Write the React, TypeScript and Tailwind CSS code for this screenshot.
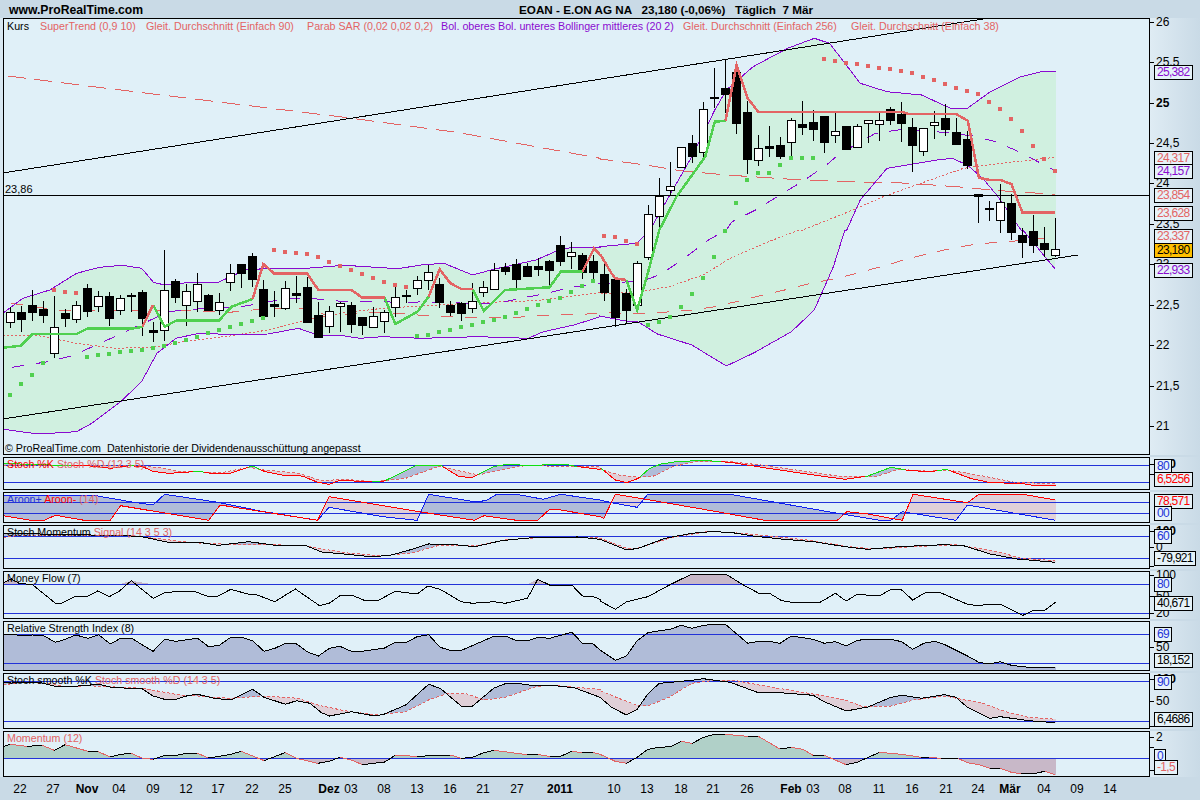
type Pt = number[];

const SALMON = '#e36464';
const PURPLE = '#8a0ad0';
const GREEN = '#50d050';
const BLUE = '#2232d8';

// traced points are in crop units, these bring them back to page pixels
const L = (p: Pt[], top: number) => p.map(([x, y]) => [x / 2.613, top + y / 3]);
const R = (p: Pt[], top: number) => p.map(([x, y]) => [600 + x / 2.613, top + y / 3]);

const pts = (p: Pt[]) => p.map(([x, y]) => `${x.toFixed(1)},${y.toFixed(1)}`).join(' ');

function at(p: Pt[], x: number) {
  if (x <= p[0][0]) return p[0][1];
  for (let i = 1; i < p.length; i++) {
    if (x <= p[i][0]) {
      const t = (x - p[i - 1][0]) / (p[i][0] - p[i - 1][0] || 1);
      return p[i - 1][1] + t * (p[i][1] - p[i - 1][1]);
    }
  }
  return p[p.length - 1][1];
}

// quads between two lines, split on which one is above
function between(a: Pt[], b: Pt[], from = 4, to = 1056) {
  let up = '';
  let down = '';
  for (let x = from; x < to; x++) {
    const a0 = at(a, x), a1 = at(a, x + 1), b0 = at(b, x), b1 = at(b, x + 1);
    const d = `M${x} ${a0.toFixed(1)}L${x + 1} ${a1.toFixed(1)}L${x + 1} ${b1.toFixed(1)}L${x} ${b0.toFixed(1)}Z`;
    if (a0 + a1 < b0 + b1) up += d;
    else down += d;
  }
  return { up, down };
}

function splitLine(a: Pt[], b: Pt[], from = 4, to = 1056) {
  let up = '';
  let down = '';
  for (let x = from; x < to; x++) {
    const d = `M${x} ${at(a, x).toFixed(1)}L${x + 1} ${at(a, x + 1).toFixed(1)}`;
    if (at(a, x) < at(b, x)) up += d;
    else down += d;
  }
  return { up, down };
}

// [wick top, body top, body bottom, wick bottom, filled]
const candlesA: Pt[] = [
  [232, 247, 278, 295, 0], [228, 246, 267, 305, 1], [180, 225, 246, 272, 1], [213, 236, 255, 280, 1], [198, 292, 370, 385, 0],
  [238, 249, 264, 292, 1], [213, 226, 269, 280, 0], [162, 175, 243, 260, 1], [183, 199, 230, 245, 0], [185, 198, 264, 288, 1],
  [195, 205, 240, 255, 0], [188, 196, 200, 245, 1], [180, 186, 264, 318, 1], [276, 300, 305, 336, 1], [60, 181, 301, 333, 0],
  [148, 153, 200, 220, 1], [162, 184, 227, 288, 0], [128, 162, 212, 245, 0], [192, 195, 240, 240, 1], [190, 217, 240, 255, 0],
  [102, 130, 158, 183, 0], [102, 102, 129, 175, 1], [70, 78, 146, 172, 1], [150, 177, 258, 270, 1], [182, 222, 228, 262, 1],
  [153, 175, 236, 240, 0], [138, 189, 194, 220, 1], [140, 171, 275, 275, 1], [215, 255, 320, 322, 1], [228, 243, 287, 310, 0],
  [215, 220, 230, 305, 0], [215, 225, 282, 310, 1], [260, 261, 285, 315, 1], [232, 259, 293, 293, 0], [240, 247, 275, 308, 0],
  [170, 202, 233, 260, 0], [180, 195, 199, 218, 1], [138, 151, 176, 195, 0], [105, 127, 152, 180, 0], [145, 162, 215, 234, 1],
  [213, 225, 246, 258, 1], [215, 220, 251, 272, 1], [160, 214, 236, 250, 0], [153, 172, 187, 200, 0], [100, 120, 176, 178, 0],
  [100, 110, 122, 135, 1], [88, 102, 147, 178, 1], [98, 108, 137, 138, 1], [85, 108, 116, 138, 1], [90, 93, 120, 168, 1],
  [18, 45, 92, 108, 1], [35, 67, 80, 118, 0], [70, 76, 126, 148, 1], [75, 94, 128, 160, 1], [100, 132, 187, 212, 1],
  [148, 148, 263, 290, 1], [178, 190, 240, 278, 1], [93, 100, 225, 225, 0],
];
const candlesB: Pt[] = [
  [615, 642, 771, 780, 0], [535, 588, 647, 690, 0], [487, 559, 572, 588, 0], [442, 442, 503, 505, 0], [405, 430, 470, 490, 1],
  [305, 328, 458, 475, 0], [205, 291, 295, 325, 1], [178, 265, 282, 340, 1], [195, 215, 368, 402, 1], [303, 337, 478, 522, 1],
  [405, 445, 481, 497, 0], [378, 438, 443, 470, 1], [412, 435, 467, 478, 1], [355, 361, 427, 468, 0], [303, 372, 380, 405, 1],
  [330, 366, 386, 422, 1], [348, 348, 425, 458, 1], [340, 394, 406, 428, 0], [378, 378, 446, 448, 1], [372, 379, 442, 445, 0],
  [362, 361, 370, 428, 0], [340, 361, 373, 422, 0], [320, 328, 362, 375, 1], [305, 343, 371, 425, 1], [355, 381, 434, 515, 1],
  [385, 385, 454, 467, 0], [332, 367, 376, 416, 0], [313, 355, 389, 407, 1], [355, 396, 431, 431, 1], [393, 418, 497, 508, 1],
  [583, 583, 589, 668, 1], [603, 625, 629, 662, 1], [553, 605, 660, 700, 0], [583, 610, 698, 720, 1], [685, 705, 725, 773, 1],
  [645, 692, 735, 760, 1], [680, 730, 748, 770, 1], [655, 748, 766, 770, 0],
];
const candles = [
  ...candlesA.map(([a, b, c, d, f]) => [230 + a / 3, 230 + b / 3, 230 + c / 3, 230 + d / 3, f]),
  ...candlesB.map(([a, b, c, d, f]) => [a / 3, b / 3, c / 3, d / 3, f]),
];

const bbUpper = [
  ...L([[9, 248], [60, 205], [130, 180], [200, 130], [260, 112], [320, 106], [370, 115], [401, 157], [430, 165], [490, 158], [570, 157], [603, 140], [640, 120], [690, 116], [800, 115], [900, 106], [1040, 116], [1100, 105], [1160, 100], [1235, 135], [1290, 118], [1400, 90], [1465, 58], [1500, 52], [1568, 52]], 230),
  ...R([[0, 50], [96, 40]], 230),
  ...R([[130, 690], [170, 610], [240, 470], [300, 330], [330, 270], [400, 200], [490, 145], [560, 115], [600, 130], [640, 190], [680, 250], [750, 275], [840, 285], [920, 327], [960, 325], [1020, 275], [1100, 230], [1160, 213], [1192, 214]], 0),
];
const bbLower = [
  ...L([[9, 598], [100, 612], [200, 605], [240, 580], [315, 515], [370, 455], [410, 370], [460, 325], [520, 310], [620, 314], [700, 312], [780, 295], [835, 317], [890, 316], [940, 325], [1000, 320], [1100, 325], [1250, 320], [1380, 325], [1420, 305], [1500, 285], [1568, 260]], 230),
  ...R([[0, 258], [60, 272], [100, 276], [150, 312], [240, 345], [330, 408], [400, 370], [500, 305], [560, 240], [610, 110], [640, 0]], 230),
  ...R([[645, 690], [680, 600], [750, 505], [880, 480], [920, 475], [960, 495], [1000, 535], [1040, 590], [1100, 690]], 0),
  ...R([[1105, 0], [1190, 118]], 230),
];
const bbMid = [
  ...L([[32, 412], [125, 395], [188, 377], [250, 346], [313, 313], [375, 280], [440, 245], [500, 238], [560, 235], [620, 232], [690, 218], [750, 205], [810, 205], [870, 212], [930, 216], [990, 214], [1050, 218], [1110, 215], [1170, 218], [1230, 220], [1300, 220], [1360, 205], [1430, 190], [1490, 172], [1568, 160]], 230),
  ...R([[30, 160], [120, 150], [160, 132], [220, 85], [280, 32], [330, 0]], 230),
  ...R([[345, 665], [410, 628], [470, 585], [535, 540], [595, 492], [625, 462], [720, 400], [790, 388], [850, 392], [920, 400], [975, 408], [1035, 425], [1100, 458], [1190, 513]], 0),
];
const ma90 = [
  ...L([[20, 228], [300, 268], [600, 310], [900, 352], [1200, 398], [1568, 475]], 0),
  ...R([[0, 477], [120, 495], [210, 512], [330, 525], [500, 538], [700, 547], [775, 548], [870, 555], [950, 562], [1040, 572], [1100, 575], [1190, 585]], 0),
];
const ma256 = [
  ...L([[9, 315], [100, 317], [200, 340], [300, 355], [400, 352], [480, 335], [600, 318], [700, 300], [800, 270], [900, 248], [1000, 235], [1100, 228], [1250, 218], [1400, 212], [1568, 188]], 230),
  ...R([[0, 190], [90, 188], [180, 170], [270, 135], [340, 85], [440, 35], [520, 0]], 230),
  ...R([[530, 690], [650, 635], [740, 590], [850, 545], [950, 505], [1050, 490], [1190, 472]], 0),
];
const ma38 = [
  ...L([[30, 220], [60, 225], [160, 242], [190, 240], [220, 243], [285, 240], [470, 240], [500, 240], [570, 247], [600, 247], [660, 240], [730, 235], [815, 235], [850, 255], [980, 248], [1040, 250], [1100, 256], [1160, 260], [1220, 262], [1350, 262], [1420, 256], [1500, 254], [1568, 250]], 230),
  ...R([[30, 248], [95, 252], [165, 247], [240, 240], [300, 230], [355, 215], [420, 197], [490, 178], [550, 160], [620, 145], [680, 127], [750, 105], [800, 88], [860, 70], [920, 55], [985, 42], [1060, 35], [1120, 30], [1190, 22]], 230),
];

const superGreen: Pt[][] = [
  L([[9, 353], [55, 347], [85, 312], [200, 312], [228, 296], [345, 296], [372, 290]], 230),
  L([[400, 225], [430, 290], [460, 272], [572, 272], [605, 230], [660, 207]], 230),
  L([[1005, 203], [1033, 282], [1091, 245], [1120, 200]], 230),
  L([[1235, 177], [1264, 243], [1320, 180], [1436, 172], [1465, 125], [1522, 125]], 230),
  [...R([[69, 150], [97, 240], [125, 130], [155, 0]], 230), ...R([[200, 590], [250, 510], [275, 470], [300, 365], [328, 362]], 0)],
];
const superRed: Pt[][] = [
  L([[372, 290], [400, 225]], 230),
  L([[660, 207], [688, 102], [717, 131], [803, 131], [832, 180], [918, 180], [947, 203], [1005, 203]], 230),
  L([[1120, 200], [1149, 118], [1177, 160], [1206, 177], [1235, 177]], 230),
  [...L([[1522, 125], [1552, 55], [1568, 75]], 230), ...R([[0, 72], [30, 130], [40, 145], [69, 150]], 230)],
  R([[328, 362], [357, 195], [386, 295], [414, 336], [790, 336], [806, 342], [930, 342], [961, 362], [990, 533], [1018, 540], [1046, 540], [1075, 552], [1104, 638], [1190, 638]], 0),
];

const sarGreen = [
  ...L([[26, 495], [55, 462], [84, 434], [113, 400], [227, 380], [256, 375], [285, 371], [313, 366], [342, 363], [371, 360], [400, 353], [429, 349], [458, 339], [487, 330], [515, 322], [544, 308], [573, 300], [601, 291], [630, 281], [659, 273], [688, 264], [1090, 318], [1119, 314], [1148, 306], [1177, 299], [1205, 291], [1234, 285], [1262, 276], [1291, 269], [1320, 261], [1349, 249], [1377, 237], [1406, 225], [1435, 213], [1464, 204], [1492, 185], [1521, 168], [1550, 153]], 230),
  ...R([[125, 285], [154, 275], [183, 260], [212, 231], [240, 192], [269, 144], [298, 81], [326, 3]], 230),
  ...R([[355, 608], [384, 540], [413, 519], [442, 519], [471, 495], [499, 474], [528, 474], [557, 474]], 0),
];
const sarRed = [
  ...L([[141, 180], [170, 185], [198, 189], [716, 60], [745, 66], [773, 69], [802, 72], [831, 81], [860, 96], [888, 108], [917, 120], [946, 132], [975, 144], [1003, 156], [1032, 165], [1061, 171]], 230),
  ...R([[11, 18], [40, 21], [68, 33], [97, 42]], 230),
  ...R([[586, 177], [615, 183], [643, 189], [672, 192], [701, 198], [730, 204], [758, 207], [787, 213], [816, 219], [844, 231], [873, 240], [902, 252], [931, 264], [959, 273], [988, 282], [1017, 306], [1046, 327], [1074, 357], [1103, 393], [1132, 438], [1161, 477], [1190, 513]], 0),
];

const stochK = [
  ...L([[9, 40], [100, 44], [240, 48], [290, 55], [340, 47], [372, 50], [400, 64], [440, 70], [520, 64], [550, 70], [600, 70], [660, 48], [690, 64], [740, 76], [790, 78], [830, 97], [860, 103], [890, 90], [950, 95], [1005, 93], [1060, 62], [1090, 45], [1150, 45], [1200, 80], [1235, 82], [1290, 50], [1320, 44], [1410, 46], [1430, 43], [1480, 44], [1510, 50], [1568, 58]], 450),
  ...R([[0, 52], [40, 90], [70, 98], [100, 85], [130, 55], [160, 42], [200, 35], [250, 32], [280, 32], [340, 37], [440, 55], [540, 72], [640, 88], [700, 78], [760, 52], [800, 60], [860, 66], [905, 58], [970, 86], [1020, 98], [1100, 100], [1130, 106], [1190, 106]], 450),
];
const stochD = [
  ...L([[9, 45], [140, 46], [370, 48], [410, 52], [470, 64], [580, 68], [650, 52], [690, 60], [780, 70], [840, 92], [900, 88], [980, 95], [1060, 85], [1120, 60], [1150, 48], [1190, 60], [1250, 75], [1300, 62], [1370, 47], [1568, 50]], 450),
  ...R([[0, 58], [50, 75], [100, 82], [140, 78], [190, 50], [250, 35], [340, 35], [420, 45], [500, 58], [620, 78], [720, 80], [780, 58], [860, 64], [910, 60], [1000, 78], [1080, 96], [1150, 100], [1190, 102]], 450),
];
const aroonUp = [
  ...L([[9, 135], [240, 135], [350, 157], [400, 165], [430, 133], [570, 157], [680, 183], [830, 211], [860, 172], [1000, 200], [1090, 211], [1120, 133], [1240, 155], [1270, 152], [1295, 135], [1350, 133], [1420, 148], [1465, 133], [1568, 150]], 450),
  ...R([[30, 158], [97, 172], [125, 133], [340, 133], [620, 190], [730, 211], [760, 211], [790, 185], [930, 211], [960, 165], [1190, 211]], 450),
];
const aroonDown = [
  ...L([[9, 197], [80, 211], [115, 211], [145, 196], [220, 211], [288, 211], [315, 167], [545, 211], [575, 165], [830, 211], [860, 140], [1100, 186], [1240, 211], [1265, 197], [1350, 211], [1405, 211], [1436, 178], [1465, 180], [1568, 200]], 450),
  ...R([[10, 205], [40, 133], [120, 148], [300, 184], [430, 211], [620, 211], [645, 185], [700, 192], [760, 205], [790, 211], [818, 133], [960, 158], [990, 133], [1105, 133], [1190, 150]], 450),
];
const momK = [
  ...L([[9, 250], [330, 257], [370, 260], [440, 277], [520, 277], [570, 286], [650, 275], [720, 286], [800, 287], [840, 306], [900, 312], [970, 320], [1020, 316], [1070, 300], [1120, 282], [1180, 283], [1240, 290], [1310, 272], [1400, 262], [1510, 261], [1568, 268]], 450),
  ...R([[0, 268], [70, 300], [100, 295], [170, 265], [240, 250], [290, 245], [340, 247], [400, 258], [480, 268], [560, 275], [640, 290], [700, 298], [780, 290], [900, 284], [950, 287], [1020, 312], [1090, 327], [1190, 337]], 450),
];
const momD = [
  ...L([[9, 262], [60, 255], [330, 257], [410, 265], [500, 278], [620, 284], [740, 285], [800, 288], [900, 308], [1000, 318], [1080, 308], [1150, 285], [1240, 288], [1320, 270], [1420, 262], [1568, 263]], 450),
  ...R([[0, 265], [70, 295], [100, 294], [190, 262], [280, 245], [340, 247], [440, 258], [540, 270], [650, 290], [720, 297], [820, 290], [930, 284], [1040, 305], [1100, 325], [1190, 332]], 450),
];
const moneyFlow = [
  ...L([[9, 398], [30, 387], [50, 400], [85, 404], [145, 460], [160, 460], [200, 438], [230, 438], [255, 423], [285, 440], [310, 425], [343, 392], [400, 445], [430, 428], [470, 424], [510, 425], [545, 440], [570, 438], [603, 418], [650, 433], [670, 434], [718, 455], [772, 417], [835, 467], [860, 460], [890, 436], [920, 436], [950, 450], [990, 450], [1033, 424], [1090, 432], [1118, 408], [1150, 418], [1205, 455], [1235, 460], [1290, 455], [1320, 460], [1378, 445], [1405, 388], [1436, 405], [1494, 405], [1522, 438], [1550, 440], [1568, 448]], 450),
  ...R([[0, 453], [40, 478], [70, 455], [125, 440], [185, 403], [240, 372], [328, 372], [375, 405], [415, 430], [443, 430], [475, 452], [500, 457], [575, 457], [615, 430], [643, 453], [672, 433], [730, 438], [760, 418], [788, 420], [817, 450], [850, 428], [890, 428], [960, 463], [990, 467], [1010, 463], [1046, 463], [1105, 496], [1133, 481], [1162, 481], [1190, 457]], 450),
];
const rsi = [
  ...L([[9, 42], [30, 42], [55, 47], [85, 45], [115, 48], [145, 67], [170, 58], [198, 45], [230, 55], [258, 44], [288, 72], [315, 55], [345, 55], [372, 75], [400, 94], [430, 58], [460, 64], [516, 55], [546, 81], [574, 75], [603, 52], [632, 52], [660, 62], [690, 94], [718, 85], [746, 70], [775, 72], [805, 97], [832, 108], [861, 85], [888, 79], [918, 94], [947, 94], [1005, 84], [1033, 67], [1062, 67], [1090, 50], [1120, 44], [1150, 82], [1177, 91], [1206, 91], [1264, 62], [1292, 48], [1320, 48], [1350, 62], [1378, 62], [1407, 52], [1436, 55], [1494, 37], [1522, 70], [1550, 72], [1568, 90]], 620),
  ...R([[40, 121], [69, 108], [97, 62], [125, 38], [155, 32], [184, 28], [212, 16], [241, 25], [270, 16], [300, 13], [328, 13], [386, 70], [414, 64], [443, 64], [470, 70], [500, 48], [557, 58], [586, 70], [615, 65], [643, 78], [672, 61], [702, 58], [760, 58], [788, 65], [817, 88], [846, 70], [875, 64], [903, 75], [960, 108], [990, 127], [1018, 132], [1046, 125], [1075, 136], [1120, 142], [1190, 142]], 620),
];
const smoothK = [
  ...L([[9, 188], [30, 186], [100, 186], [140, 198], [170, 201], [260, 193], [290, 202], [372, 207], [400, 228], [430, 238], [460, 238], [490, 227], [516, 223], [560, 235], [603, 240], [660, 208], [690, 232], [746, 253], [775, 242], [810, 250], [840, 278], [861, 288], [918, 275], [980, 288], [1005, 282], [1060, 255], [1120, 193], [1150, 205], [1205, 258], [1235, 258], [1290, 205], [1320, 191], [1350, 190], [1400, 198], [1440, 196], [1500, 203], [1568, 232]], 620),
  ...R([[30, 262], [69, 285], [97, 268], [125, 222], [155, 190], [185, 187], [240, 181], [270, 176], [300, 181], [340, 187], [414, 218], [470, 218], [557, 226], [586, 245], [643, 273], [700, 261], [760, 232], [790, 226], [840, 235], [900, 224], [930, 232], [960, 262], [1018, 295], [1046, 290], [1120, 302], [1190, 308]], 620),
];
const smoothD = [
  ...L([[9, 195], [60, 186], [140, 192], [170, 201], [230, 197], [372, 205], [470, 225], [516, 228], [600, 235], [690, 228], [780, 235], [830, 255], [900, 272], [980, 285], [1060, 275], [1120, 240], [1170, 220], [1220, 222], [1265, 240], [1320, 232], [1400, 200], [1440, 196], [1568, 208]], 620),
  ...R([[0, 212], [60, 240], [97, 256], [125, 258], [180, 232], [240, 190], [300, 181], [350, 181], [440, 200], [557, 222], [640, 240], [690, 261], [760, 258], [820, 240], [900, 228], [1000, 250], [1060, 275], [1120, 292], [1190, 298]], 620),
];
const momentum = [
  ...L([[9, 380], [27, 373], [70, 379], [110, 376], [142, 391], [170, 374], [230, 394], [255, 394], [288, 411], [315, 403], [343, 400], [372, 415], [400, 418], [430, 406], [460, 406], [488, 400], [516, 400], [545, 414], [603, 403], [630, 394], [690, 422], [745, 398], [775, 415], [830, 430], [860, 424], [888, 412], [918, 420], [947, 434], [1005, 426], [1033, 406], [1090, 409], [1177, 405], [1205, 415], [1235, 412], [1264, 398], [1292, 391], [1350, 400], [1378, 404], [1407, 404], [1436, 409], [1465, 409], [1494, 394], [1522, 398], [1550, 398], [1568, 403]], 620),
  ...R([[40, 424], [69, 430], [97, 412], [125, 388], [155, 382], [185, 380], [212, 364], [241, 370], [270, 352], [300, 343], [328, 343], [386, 349], [414, 349], [470, 387], [500, 382], [530, 388], [557, 406], [586, 406], [643, 434], [672, 427], [730, 397], [788, 403], [840, 412], [860, 412], [890, 415], [935, 415], [960, 428], [990, 434], [1018, 445], [1046, 445], [1075, 457], [1100, 461], [1133, 461], [1162, 454], [1190, 464]], 620),
];

function Svg({ top, height, children }: { top: number; height: number; children: React.ReactNode }) {
  // page coordinates go straight into the chart, so only the box has to be offset
  return (
    <svg width={1145} height={height - 2} viewBox={`4 ${top + 1} 1145 ${height - 2}`} shapeRendering="crispEdges" className="block">
      {children}
    </svg>
  );
}

const Level = ({ y }: { y: number }) => <line x1={4} x2={1149} y1={y} y2={y} stroke={BLUE} strokeWidth={1} />;

function Panel({ top, height, children, label, tags }: { top: number; height: number; children: React.ReactNode; label?: React.ReactNode; tags?: React.ReactNode }) {
  return (
    <div className="flex" style={{ height }}>
      <div className="w-[3px] bg-[#d8e7f0]" />
      <div className="relative box-border w-[1147px] border border-black bg-[#e0f0f8]">
        <Svg top={top} height={height}>{children}</Svg>
        {label && <div className="absolute left-[3px] top-0 whitespace-pre text-[10.7px] leading-[13px]">{label}</div>}
      </div>
      <div className="relative w-[50px] bg-gradient-to-r from-[#dfecf4] to-[#c9dae6] text-[12px]">
        {tags}
      </div>
    </div>
  );
}

const Gap = () => <div className="h-[2px] w-[1150px] bg-[#dcebf4]" />;

function Tick({ y, top, text, bold }: { y: number; top: number; text?: string; bold?: boolean }) {
  return (
    <div className="absolute left-0 flex items-center" style={{ top: y - top - 7, height: 14 }}>
      <span className="h-px w-[4px] bg-black" />
      {text && <span className={`ml-[2px] text-black ${bold ? 'font-bold' : ''}`}>{text}</span>}
    </div>
  );
}

function Tag({ y, top, text, color, bg }: { y: number; top: number; text: string; color: string; bg?: string }) {
  return (
    <div
      className="absolute left-[4px] box-border flex h-[15px] items-center border border-black px-[2px] text-[12px] leading-none tracking-[-0.7px]"
      style={{ top: y - top - 7.5, color, background: bg ?? '#e6f2f8' }}
    >
      {text}
    </div>
  );
}

function StochLines({ k, d, upColor, downColor }: { k: Pt[]; d: Pt[]; upColor: string; downColor: string }) {
  const s = splitLine(k, d);
  return (
    <>
      <path d={s.up} fill="none" stroke={upColor} strokeWidth={1} />
      <path d={s.down} fill="none" stroke={downColor} strokeWidth={1} />
    </>
  );
}

function Fill({ a, b, up, down }: { a: Pt[]; b: Pt[]; up: string; down: string }) {
  const f = between(a, b);
  return (
    <>
      <path d={f.up} fill={up} />
      <path d={f.down} fill={down} />
    </>
  );
}

const dates: [number, string, boolean?][] = [
  [20, '22'], [53, '27'], [87, 'Nov', true], [119, '04'], [153, '09'], [186, '12'], [218, '17'], [252, '22'], [285, '25'], [329, 'Dez', true], [351, '03'], [384, '08'], [417, '13'], [450, '16'], [483, '21'], [517, '27'], [560, '2011', true],
  [614, '10'], [647, '13'], [681, '18'], [713, '21'], [747, '26'], [791, 'Feb', true], [813, '03'], [845, '08'], [879, '11'], [912, '16'], [946, '21'], [978, '24'], [1010, 'Mär', true], [1044, '04'], [1077, '09'], [1110, '14'],
];

export default function App() {
  const green = `${pts(bbUpper)} ${pts([...bbLower].reverse())}`;

  return (
    <div className="flex h-[800px] w-[1200px] flex-col overflow-hidden bg-[#c9dae6] font-['Liberation_Sans',sans-serif] text-black">
      <div className="relative h-[18px] shrink-0 font-bold leading-[20px]">
        <span className="absolute left-[9px] text-[12.2px]">www.ProRealTime.com</span>
        <span className="absolute left-[519px] whitespace-pre text-[11.7px]">EOAN - E.ON AG NA   23,180 (-0,06%)   Täglich  7 Mär</span>
      </div>

      <Panel
        top={18}
        height={437}
        label={
          <div className="relative h-[14px] w-[1100px]">
            <span className="absolute left-0 top-[1px]">Kurs</span>
            <span className="absolute left-[33px] top-[1px] text-[#e36464]">SuperTrend (0,9 10)</span>
            <span className="absolute left-[139px] top-[1px] text-[#e36464]">Gleit. Durchschnitt (Einfach 90)</span>
            <span className="absolute left-[300px] top-[1px] text-[#e36464]">Parab SAR (0,02 0,02 0,2)</span>
            <span className="absolute left-[434px] top-[1px] text-[#8a0ad0]">Bol. oberes Bol. unteres Bollinger mittleres (20 2)</span>
            <span className="absolute left-[676px] top-[1px] text-[#e36464]">Gleit. Durchschnitt (Einfach 256)</span>
            <span className="absolute left-[844px] top-[1px] text-[#e36464]">Gleit. Durchschnitt (Einfach 38)</span>
          </div>
        }
        tags={
          <>
            <Tick y={22} top={18} text="26" />
            <Tick y={62} top={18} text="25,5" />
            <Tick y={103} top={18} text="25" bold />
            <Tick y={143} top={18} text="24,5" />
            <Tick y={183} top={18} text="24" />
            <Tick y={224} top={18} text="23,5" />
            <Tick y={264} top={18} text="23" />
            <Tick y={305} top={18} text="22,5" />
            <Tick y={345} top={18} text="22" />
            <Tick y={386} top={18} text="21,5" />
            <Tick y={426} top={18} text="21" />
            <Tag y={72} top={18} text="25,382" color={PURPLE} />
            <Tag y={158} top={18} text="24,317" color={SALMON} />
            <Tag y={171} top={18} text="24,157" color={PURPLE} />
            <Tag y={195} top={18} text="23,854" color={SALMON} />
            <Tag y={213} top={18} text="23,628" color={SALMON} />
            <Tag y={236} top={18} text="23,337" color={SALMON} />
            <Tag y={250} top={18} text="23,180" color="#000" bg="#ffc000" />
            <Tag y={270} top={18} text="22,933" color={PURPLE} />
          </>
        }
      >
        <polygon points={green} fill="#d0f0e0" />
        <polyline points={pts(ma90)} fill="none" stroke={SALMON} strokeDasharray="18 9" />
        <polyline points={pts(ma38)} fill="none" stroke={SALMON} strokeDasharray="12 12" />
        <polyline points={pts(ma256)} fill="none" stroke={SALMON} strokeDasharray="2 2" />
        <polyline points={pts(bbUpper)} fill="none" stroke={PURPLE} />
        <polyline points={pts(bbLower)} fill="none" stroke={PURPLE} />
        <polyline points={pts(bbMid)} fill="none" stroke={PURPLE} strokeDasharray="12 12" />
        <line x1={4} x2={1149} y1={195} y2={195} stroke="#000" />
        <line x1={4} y1={172.8} x2={983} y2={19} stroke="#000" />
        <line x1={4} y1={418.8} x2={1078} y2={255} stroke="#000" />
        {candles.map(([a, b, c, d, f], i) => {
          const x = Math.round(10.3 + 11 * i);
          return (
            <g key={i}>
              <line x1={x + 0.5} x2={x + 0.5} y1={a} y2={d} stroke="#000" />
              <rect x={x - 3.5} y={Math.round(b)} width={8} height={Math.max(Math.round(c - b), 1)} fill={f ? '#000' : '#fff'} stroke="#000" />
            </g>
          );
        })}
        {superGreen.map((p, i) => <polyline key={i} points={pts(p)} fill="none" stroke={GREEN} strokeWidth={2.5} />)}
        {superRed.map((p, i) => <polyline key={i} points={pts(p)} fill="none" stroke={SALMON} strokeWidth={2.5} />)}
        {sarGreen.map(([x, y], i) => <rect key={i} x={Math.round(x) - 2} y={Math.round(y) - 2} width={4} height={4} fill={GREEN} />)}
        {sarRed.map(([x, y], i) => <rect key={i} x={Math.round(x) - 2} y={Math.round(y) - 2} width={4} height={4} fill={SALMON} />)}
        <text x={5} y={193} fontSize={11} fill="#000" fontFamily="'Liberation Sans', sans-serif">23,86</text>
        <text x={5} y={452} fontSize={10.7} fill="#000" xmlSpace="preserve" fontFamily="'Liberation Sans', sans-serif">© ProRealTime.com  Datenhistorie der Dividendenausschüttung angepasst</text>
      </Panel>
      <Gap />

      <Panel
        top={457}
        height={33}
        label={<span><span className="text-[#ff0000]">Stoch %K </span><span className="text-[#e36464]">Stoch %D (12 3 5)</span></span>}
        tags={
          <>
            <Tick y={464} top={457} text="100" bold />
            <Tick y={474} top={457} />
            <Tag y={466} top={457} text="80" color={BLUE} />
            <Tag y={479} top={457} text="6,5256" color="#ff0000" />
          </>
        }
      >
        <Fill a={stochK} b={stochD} up="#b0bcd8" down="#e0d0d8" />
        <Level y={465.5} />
        <Level y={482.5} />
        <polyline points={pts(stochD)} fill="none" stroke={SALMON} strokeDasharray="3 2" />
        <StochLines k={stochK} d={stochD} upColor="#10e010" downColor="#ff0000" />
      </Panel>
      <Gap />

      <Panel
        top={492}
        height={31}
        label={<span><span className="text-[#2232d8]">Aroon+ </span><span className="text-[#ff0000]">Aroon- </span><span className="text-[#e36464]">(14)</span></span>}
        tags={
          <>
            <Tag y={501} top={492} text="78,571" color="#ff0000" />
            <Tag y={513} top={492} text="00" color={BLUE} />
          </>
        }
      >
        <Fill a={aroonUp} b={aroonDown} up="#b0bcd8" down="#e0d0d8" />
        <Level y={502} />
        <Level y={513} />
        <polyline points={pts(aroonUp)} fill="none" stroke="#1020f0" />
        <polyline points={pts(aroonDown)} fill="none" stroke="#ff0000" />
      </Panel>
      <Gap />

      <Panel
        top={525}
        height={44}
        label={<span><span>Stoch Momentum </span><span className="text-[#e36464]">Signal (14 3 5 3)</span></span>}
        tags={
          <>
            <Tick y={531} top={525} text="100" bold />
            <Tick y={547} top={525} text="0" />
            <Tick y={566} top={525} />
            <Tag y={536} top={525} text="60" color={BLUE} />
            <Tag y={558} top={525} text="-79,921" color="#000" />
          </>
        }
      >
        <Fill a={momK} b={momD} up="#b0bcd8" down="#e0d0d8" />
        <Level y={536.5} />
        <Level y={558.5} />
        <polyline points={pts(momD)} fill="none" stroke={SALMON} strokeDasharray="3 2" />
        <polyline points={pts(momK)} fill="none" stroke="#000" />
      </Panel>
      <Gap />

      <Panel
        top={571}
        height={48}
        label={<span>Money Flow (7)</span>}
        tags={
          <>
            <Tick y={575} top={571} text="100" />
            <Tick y={596} top={571} text="50" />
            <Tick y={613} top={571} text="20" />
            <Tag y={584} top={571} text="80" color={BLUE} />
            <Tag y={603} top={571} text="40,671" color="#000" />
          </>
        }
      >
        <path d={between(moneyFlow.map(([x, y]) => [x, Math.min(y, 584.5)]), [[4, 584.5], [1056, 584.5]]).up} fill="#c8b8c8" />
        <Level y={584.5} />
        <Level y={613.5} />
        <polyline points={pts(moneyFlow)} fill="none" stroke="#000" />
      </Panel>
      <Gap />

      <Panel
        top={621}
        height={50}
        label={<span>Relative Strength Index (8)</span>}
        tags={
          <>
            <Tick y={647} top={621} text="50" />
            <Tag y={634} top={621} text="69" color={BLUE} />
            <Tag y={660} top={621} text="18,152" color="#000" />
          </>
        }
      >
        <path d={between(rsi, [[4, 671], [1056, 671]]).up} fill="#b0bcd8" />
        <Level y={634.5} />
        <Level y={663.5} />
        <polyline points={pts(rsi)} fill="none" stroke="#000" />
      </Panel>
      <Gap />

      <Panel
        top={673}
        height={56}
        label={<span><span>Stoch smooth %K </span><span className="text-[#e36464]">Stoch smooth %D (14 3 5)</span></span>}
        tags={
          <>
            <Tick y={679} top={673} text="100" bold />
            <Tick y={701} top={673} text="50" />
            <Tick y={726} top={673} />
            <Tag y={682} top={673} text="90" color={BLUE} />
            <Tag y={719} top={673} text="6,4686" color="#000" />
          </>
        }
      >
        <Fill a={smoothK} b={smoothD} up="#b0bcd8" down="#e0d0d8" />
        <Level y={681.5} />
        <Level y={721.5} />
        <polyline points={pts(smoothD)} fill="none" stroke={SALMON} strokeDasharray="3 2" />
        <polyline points={pts(smoothK)} fill="none" stroke="#000" />
      </Panel>
      <Gap />

      <Panel
        top={731}
        height={46}
        label={<span className="text-[#e36464]">Momentum (12)</span>}
        tags={
          <>
            <Tick y={737} top={731} text="2" />
            <Tick y={747} top={731} />
            <Tick y={770} top={731} />
            <Tag y={756} top={731} text="0" color={BLUE} />
            <Tag y={767} top={731} text="-1,5" color={SALMON} />
          </>
        }
      >
        <Fill a={momentum} b={[[4, 758.5], [1056, 758.5]]} up="#b0d0c8" down="#c8b8c8" />
        <Level y={758.5} />
        {momentum.slice(1).map(([x, y], i) => {
          const [px, py] = momentum[i];
          return <line key={i} x1={px} y1={py} x2={x} y2={y} stroke={y > py ? SALMON : '#000'} />;
        })}
      </Panel>

      <div className="relative flex-1 text-[12px]">
        {dates.map(([x, text, bold]) => (
          <span key={`${x}`} className={`absolute top-[3px] -translate-x-1/2 ${bold ? 'font-bold' : ''}`} style={{ left: x }}>
            {text}
          </span>
        ))}
      </div>
    </div>
  );
}
